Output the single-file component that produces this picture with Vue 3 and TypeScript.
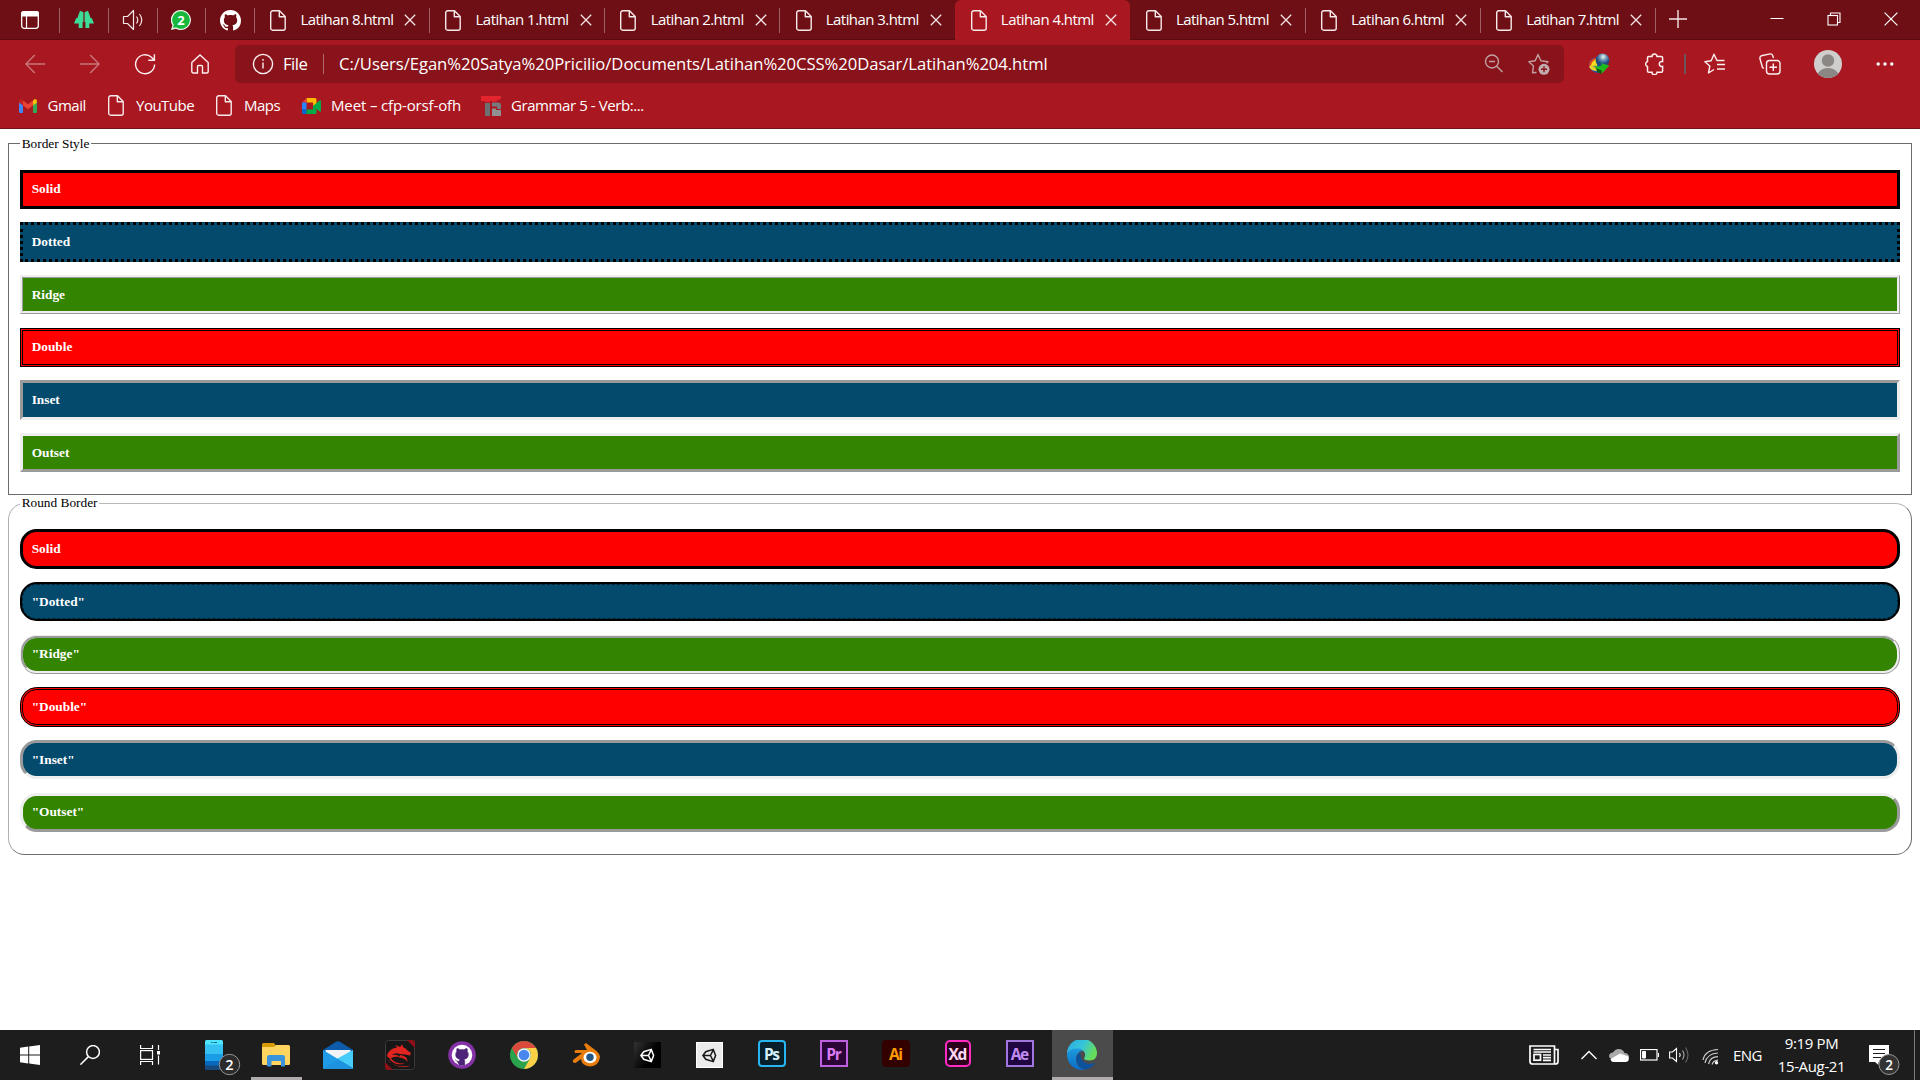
<script setup lang="ts">
interface Tab { title: string; active: boolean }
interface Bar { label: string; kind: string; color: string }

const tabs: Tab[] = [8, 1, 2, 3, 4, 5, 6, 7].map((n) => ({ title: `Latihan ${n}.html`, active: n === 4 }))

const kinds = ['Solid', 'Dotted', 'Ridge', 'Double', 'Inset', 'Outset']
const colors = ['red', 'blue', 'green']
const square: Bar[] = kinds.map((k, i) => ({ label: k, kind: k.toLowerCase(), color: colors[i % 3] }))
const round: Bar[] = square.map((b, i) => ({ ...b, label: i === 0 ? b.label : `"${b.label}"` }))

const adobe = [
  { name: 'Ps', cls: 'ps' },
  { name: 'Pr', cls: 'pr' },
  { name: 'Ai', cls: 'ai' },
  { name: 'Xd', cls: 'xd' },
  { name: 'Ae', cls: 'ae' },
]
</script>

<template>
  <div class="screen">
    <header class="browser">
      <div class="tabstrip">
        <div class="pin first">
          <svg width="20" height="20" viewBox="0 0 20 20"><rect x="1.7" y="1.7" width="16.6" height="16.6" rx="2.5" fill="none" stroke="#fff" stroke-width="1.3" /><path d="M1 6.5V3.5A2.5 2.5 0 0 1 3.500 1h13A2.5 2.5 0 0 1 19 3.500v3z" fill="#fff" /><path d="M6.500 6v12" stroke="#fff" stroke-width="1.200" /></svg>
        </div>
        <div class="pin">
          <svg width="20" height="20" viewBox="0 0 20 20"><path d="M6 .8L9.400 2.300V12H8.600V18H4.700V13.500H0L2.200 8L3.300 8.300zM14 .8L10.600 2.300V12H11.400V18H15.300V13.500H20L17.800 8L16.700 8.300z" fill="#3ddc97" /></svg>
        </div>
        <div class="pin">
          <svg width="22" height="22" viewBox="0 0 22 22" fill="none" stroke="#f3e4e5" stroke-width="1.200"><path d="M1.500 7.500H5.500L11.500 1.500V20.500L5.500 14.500H1.500Z" stroke-linejoin="round" /><path d="M14.500 7.500Q17 11 14.500 14.500M17.500 5Q22 11 17.500 17" /></svg>
        </div>
        <div class="pin chat">
          <svg width="20" height="20" viewBox="0 0 20 20"><path d="M10 0A10 10 0 1 1 5 18.700L0 20L1.400 15.200A10 10 0 0 1 10 0z" fill="#eaf7ec" /><path d="M10 1.300A8.700 8.700 0 1 1 5.200 17.200L1.900 18.100L2.800 15A8.700 8.700 0 0 1 10 1.300z" fill="#16b93c" /><text x="10" y="14.600" text-anchor="middle" font-size="13" font-weight="700" font-family="Open Sans, sans-serif" fill="#fff">2</text></svg>
        </div>
        <div class="pin">
          <svg width="21" height="21" viewBox="0 0 16 16"><path fill="#fff" d="M8 0C3.580 0 0 3.580 0 8c0 3.540 2.290 6.530 5.470 7.590.4.070.55-.17.55-.38 0-.19-.01-.82-.01-1.490-2.010.37-2.530-.49-2.690-.94-.09-.23-.48-.94-.82-1.130-.28-.15-.68-.52-.01-.53.63-.01 1.080.58 1.230.82.720 1.210 1.870.87 2.330.66.070-.52.280-.87.510-1.070-1.780-.2-3.640-.89-3.640-3.950 0-.87.310-1.590.82-2.150-.08-.2-.36-1.020.08-2.120 0 0 .67-.21 2.200.82.640-.18 1.320-.27 2-.27s1.360.090 2 .27c1.530-1.040 2.200-.82 2.200-.82.44 1.100.16 1.920.08 2.120.51.560.82 1.270.82 2.150 0 3.070-1.870 3.750-3.650 3.950.29.250.54.730.54 1.480 0 1.070-.01 1.930-.01 2.200 0 .21.150.46.550.38A8.010 8.010 0 0 0 16 8c0-4.420-3.580-8-8-8z" /></svg>
        </div>
        <div v-for="t in tabs" :key="t.title" class="tab" :class="{ active: t.active }">
          <svg class="file" width="16" height="21" viewBox="0 0 16 21" fill="none" stroke="#f6e9ea" stroke-width="1.400" stroke-linejoin="round"><path d="M2.700.8H9.500L15.200 6.500V18.200a2 2 0 0 1-2 2H2.700a2 2 0 0 1-2-2V2.800a2 2 0 0 1 2-2zM9.300 1V6.700H15" /></svg>
          <span class="title">{{ t.title }}</span>
          <svg class="x" width="12" height="12" viewBox="0 0 12 12" stroke="#f3e4e5" stroke-width="1.300"><path d="M.8.8l10.400 10.400M11.200.8L.8 11.200" /></svg>
        </div>
        <svg class="plus" width="18" height="18" viewBox="0 0 18 18" stroke="#f3e4e5" stroke-width="1.400"><path d="M9 0v18M0 9h18" /></svg>
        <div class="win">
          <svg width="14" height="14" viewBox="0 0 14 14" stroke="#fff"><path d="M.5 6.500h13" /></svg>
          <svg width="14" height="14" viewBox="0 0 14 14" fill="none" stroke="#fff"><rect x="1" y="3.500" width="9.500" height="9.500" stroke-width="1.100" /><path d="M3.500 3.500V1H13V10.500H10.500" stroke-width="1.100" /></svg>
          <svg width="14" height="14" viewBox="0 0 14 14" stroke="#fff" stroke-width="1.200"><path d="M.6.600l12.800 12.800M13.400.600L.600 13.400" /></svg>
        </div>
      </div>

      <div class="toolbar">
        <div class="nav">
          <svg class="dim" width="20" height="20" viewBox="0 0 20 20"><path d="M20 10H1M9.800 1L.9 10l8.900 9" /></svg>
          <svg class="dim" width="20" height="20" viewBox="0 0 20 20"><path d="M0 10h19M10.200 1l8.900 9-8.900 9" /></svg>
          <svg width="22" height="22" viewBox="0 0 22 22"><path d="M20.600 11.500A9.500 9.500 0 1 1 17.500 4.200L20 7M20.400 1.200V7.200H14.300" /></svg>
          <svg width="20" height="20" viewBox="0 0 20 20"><path d="M1.800 8.500L10 1l8.200 7.500V17.500a1.500 1.500 0 0 1-1.500 1.500H12.500V12.500a1 1 0 0 0-1-1h-3a1 1 0 0 0-1 1V19H3.300a1.500 1.500 0 0 1-1.500-1.500z" /></svg>
        </div>
        <div class="address">
          <svg class="info" width="22" height="22" viewBox="0 0 22 22"><circle cx="11" cy="11" r="9.600" /><path d="M11 9.500V15.500M11 6v1.700" /></svg>
          <span class="scheme">File</span>
          <i class="bar"></i>
          <span class="url">C:/Users/Egan%20Satya%20Pricilio/Documents/Latihan%20CSS%20Dasar/Latihan%204.html</span>
          <svg class="mag" width="20" height="20" viewBox="0 0 20 20"><circle cx="8" cy="7.500" r="6.500" /><path d="M12.700 12.200L18.500 18M5 7.500h6" /></svg>
          <svg class="addfav" width="22" height="22" viewBox="0 0 22 22"><path d="M8.500 19.500L4.500 19.800L5.500 13L.9 8.700L7.200 7.700L10 1.500L12.800 7.700L20 8.700L18.500 10.200" stroke-linejoin="round" /><circle cx="16" cy="16.300" r="5.500" fill="#c2adae" stroke="none" /><path d="M16 13.300v6M13 16.300h6" stroke="#89131a" /></svg>
        </div>
        <div class="tools">
          <svg width="22" height="22" viewBox="0 0 22 22"><defs><radialGradient id="globe" cx=".55" cy=".25"><stop offset="0" stop-color="#f4f8e8" /><stop offset=".5" stop-color="#6d97b8" /><stop offset="1" stop-color="#1f4a80" /></radialGradient></defs><g stroke="none"><path d="M9 4Q0 6 1 13Q3 20 11 20L13 12z" fill="#1c56b0" /><path d="M8 4.500Q1 6.500 1 12.500L4 14Q7 9 9 7z" fill="#e2431b" /><path d="M8 6Q3 9 3 13L9 14L9.500 7z" fill="#f8d820" /><path d="M1 13.500Q3 18 9 18L10 14.500Q5 15 3.500 12z" fill="#e9d326" /><circle cx="14.500" cy="7.300" r="6.800" fill="url(#globe)" /><path d="M6.500 12Q11 15 14 11.500L12.500 10L21.300 12.500L13.500 21V17.500Q8 17 6.500 12z" fill="#1cbb1f" /><path d="M13.500 21V17.500L7.500 15L9.500 19z" fill="#0b5810" /></g></svg>
          <svg width="20" height="22" viewBox="0 0 20 22"><path d="M8 3.500a2.500 2.500 0 0 1 5 0h4.300a1.300 1.300 0 0 1 1.300 1.300V8.500a2.600 2.600 0 1 0 0 5V18a1.300 1.300 0 0 1-1.300 1.300H13a2.500 2.500 0 0 1-5 0H4.800A1.300 1.300 0 0 1 3.500 18v-4.500a2.600 2.600 0 0 1 0-5V4.800a1.300 1.300 0 0 1 1.300-1.300z" stroke-width="1.500" /></svg>
          <i class="sep"></i>
          <svg width="22" height="22" viewBox="0 0 22 22"><path d="M12.800 7.200L10 1.200L7.200 7.700L.9 8.700L5.800 13L4.500 20L10 16.500M12.500 7.500H20.500M13 11.500h8M13 16h8" stroke-linejoin="round" stroke-width="1.400" /></svg>
          <svg width="22" height="22" viewBox="0 0 22 22"><rect x="7.500" y="7.500" width="13.500" height="13.500" rx="3" /><path d="M14.300 10.500v7.500M10.500 14.300H18M5 15.500L3.500 14.500L.9 5.500Q.6 3.500 2.500 2.700L11 .9Q13 .7 13.700 2.500L14.500 5" /></svg>
          <svg class="avatar" width="28" height="28" viewBox="0 0 28 28"><clipPath id="av"><circle cx="14" cy="14" r="14" /></clipPath><g clip-path="url(#av)" stroke="none"><rect width="28" height="28" fill="#d0cecd" /><circle cx="14" cy="10.500" r="6.200" fill="#8b8785" /><ellipse cx="14" cy="26" rx="10.500" ry="8" fill="#8b8785" /></g></svg>
          <svg width="18" height="4" viewBox="0 0 18 4"><g fill="#fff" stroke="none"><circle cx="2.200" cy="2" r="1.700" /><circle cx="9" cy="2" r="1.700" /><circle cx="15.800" cy="2" r="1.700" /></g></svg>
        </div>
      </div>

      <div class="bookmarks">
        <div class="bm b1">
          <svg width="18" height="14" viewBox="0 0 18 14"><path d="M0 2.500L4 5V14H1.300A1.300 1.300 0 0 1 0 12.700z" fill="#4285f4" /><path d="M18 2.500L14 5V14h2.700A1.300 1.300 0 0 0 18 12.700z" fill="#34a853" /><path d="M4 6.500V1.500L9 5.300L14 1.500v5L9 10.300z" fill="#ea4335" /><path d="M0 2.500Q0 0 2 0Q3 0 4 1.500v5L0 3.600z" fill="#c5221f" /><path d="M18 2.500Q18 0 16 0Q15 0 14 1.500v5L18 3.600z" fill="#fbbc04" /></svg>
          <span>Gmail</span>
        </div>
        <div v-for="b in [{ n: 'YouTube', c: 'b2' }, { n: 'Maps', c: 'b3' }]" :key="b.n" class="bm" :class="b.c">
          <svg width="16" height="21" viewBox="0 0 16 21" fill="none" stroke="#f6e9ea" stroke-width="1.400" stroke-linejoin="round"><path d="M2.700.8H9.500L15.200 6.500V18.200a2 2 0 0 1-2 2H2.700a2 2 0 0 1-2-2V2.800a2 2 0 0 1 2-2zM9.300 1V6.700H15" /></svg>
          <span>{{ b.n }}</span>
        </div>
        <div class="bm b4">
          <svg width="19" height="16" viewBox="0 0 19 16"><path d="M4.500 0H13a1.500 1.500 0 0 1 1.500 1.500V6l-3.500 2V4.500H4.500z" fill="#ffba00" /><path d="M4.500 0V4.500H0z" fill="#ea4335" /><path d="M0 4.500H4.500v7H0z" fill="#2684fc" /><path d="M0 11.500H4.500V16H1.500A1.500 1.500 0 0 1 0 14.500z" fill="#0066da" /><path d="M4.500 11.500H11V8l3.500 3v3.500A1.500 1.500 0 0 1 13 16H4.500zM14.500 5L18 2.300Q19 2 19 3v10q0 1-1 .7L11 8z" fill="#00ac47" /></svg>
          <span>Meet – cfp-orsf-ofh</span>
        </div>
        <div class="bm b5">
          <svg width="20" height="20" viewBox="0 0 20 20"><path d="M0 0H20V3Q17 2.800 15 5.500H10V4H9V6H4V5H0z" fill="#e5252d" /><path d="M4 7H9V20H4z" fill="#6c7073" /><path d="M11 6.500H17a3 3 0 0 1 3 3V13H16V10.500H11z" fill="#77797c" /><path d="M11 12.500h4V14h5v6h-9z" fill="#8f9193" /></svg>
          <span>Grammar 5 - Verb:...</span>
        </div>
      </div>
    </header>

    <main class="page">
      <fieldset class="group flat">
        <legend>Border Style</legend>
        <p v-for="b in square" :key="b.label" class="box" :class="[b.kind, b.color]">{{ b.label }}</p>
      </fieldset>
      <fieldset class="group curved">
        <legend>Round Border</legend>
        <p v-for="b in round" :key="b.label" class="box" :class="[b.kind, b.color]">{{ b.label }}</p>
      </fieldset>
    </main>

    <footer class="taskbar">
      <div class="cell w60"><svg width="20" height="20" viewBox="0 0 20 20"><path d="M0 2.700L8.200 1.600V9.500H0zM9.200 1.400L20 0V9.500H9.200zM0 10.500H8.200v7.900L0 17.300zM9.200 10.500H20V20L9.200 18.600z" fill="#fff" /></svg></div>
      <div class="cell w60"><svg width="20" height="20" viewBox="0 0 20 20" fill="none" stroke="#fff" stroke-width="1.500"><circle cx="13" cy="7" r="6.400" /><path d="M8.400 11.600L.4 19.600" /></svg></div>
      <div class="cell w60"><svg width="20" height="20" viewBox="0 0 20 20" fill="none" stroke="#fff" stroke-width="1.200"><path d="M.6 0v3.500H12.500V0M.6 20v-3.500H12.500V20M18.500 0v5M18.500 10.500V19.500" /><rect x=".6" y="5.600" width="11.900" height="8.800" /><path d="M17 6h3v3.500h-3z" fill="#fff" stroke="none" /></svg></div>
      <div class="cell phone">
        <svg width="36" height="36" viewBox="0 0 36 36"><path d="M0 1.500Q0 0 1.500 0h15Q18 0 18 1.500V5H0z" fill="#4fe5ff" /><path d="M0 4.500h18V14H0z" fill="#35c1f1" /><path d="M0 14h18v7H0z" fill="#1a9de4" /><path d="M0 21h18v5H0z" fill="#0669bd" /><path d="M0 25.500h18V28.500q0 1.500-1.500 1.500h-15Q0 30 0 28.500z" fill="#174a7c" /><path d="M6 2.500h1.500M8.500 2.500H12" stroke="#14648c" /><circle cx="24.500" cy="24.500" r="10.200" fill="#2b2b2b" stroke="#969696" /><text x="24.500" y="29.700" text-anchor="middle" font-size="14.500" font-weight="600" font-family="Open Sans, sans-serif" fill="#fff">2</text></svg>
      </div>
      <div class="cell running">
        <svg width="28" height="24" viewBox="0 0 28 24"><path d="M0 1.500Q0 0 1.500 0H12l1.500 2V4H0z" fill="#d99a07" /><path d="M0 4h12l2-2H26.500Q28 2 28 3.500V20.500Q28 22 26.500 22h-25Q0 22 0 20.500z" fill="#ffd560" /><path d="M5 23.500V14q0-2 2-2H21q2 0 2 2v9.500H19V18H9.500v5.500z" fill="#3a94dc" /></svg>
      </div>
      <div class="cell"><svg width="30" height="28" viewBox="0 0 30 28"><path d="M0 9L13.500.600q1.500-.9 3 0L30 9v3H0z" fill="#0d5cab" /><path d="M2.500 9H27.500V17L15 22L2.500 16z" fill="#f1f3f6" /><path d="M0 9L15 18L30 28H1Q0 28 0 27z" fill="#1f9be8" /><path d="M30 9V27.500L14 17.800z" fill="#47cbf8" /><path d="M0 28L15 18L30 27.500V28z" fill="#1d93e0" /></svg></div>
      <div class="cell"><svg width="30" height="30" viewBox="0 0 30 30"><rect x=".5" y=".5" width="29" height="29" rx="3" fill="#171717" stroke="#3b3b3b" /><path d="M22 0H27Q30 0 30 3V8zM0 22L8 30H3Q0 30 0 27z" fill="#8f1019" /><path d="M2 15Q5 8 12 7.500L10.500 5L15 7L17 4.500L18.500 7.500Q21 8 22 10L26 13L25 15.500L20 14.500L15 14Q10 12 7 15Q12 14 15 17Q10 16 6 18Q3 19 2 15z" fill="#e02420" /><path d="M15 15Q23 16 22.500 22Q20.500 18 14 17.500zM2 19Q8 28.500 26 25.500Q12 30.500 2 19zM6 18Q9 24 20 23.500Q10 26.500 4.500 19z" fill="#d92320" /></svg></div>
      <div class="cell"><svg width="28" height="28" viewBox="0 0 28 28"><circle cx="14" cy="14" r="13.800" fill="#8431a8" /><circle cx="14" cy="14" r="10.300" fill="#fff" /><path d="M11.300 24V20.500Q8 21 7.500 18.500M11.300 24V20q0-1.200.7-1.700Q7.500 17.500 7.700 13.500Q7.700 11.500 8.800 10.500Q8.300 9 9 7.500Q10.500 7.500 12 8.800Q14 8.300 16 8.800Q17.500 7.500 19 7.500Q19.700 9 19.200 10.500Q20.300 11.500 20.300 13.500Q20.500 17.500 16 18.300q.7.500.7 1.700V24z" fill="#4d2379" stroke="#4d2379" stroke-width=".6" /></svg></div>
      <div class="cell"><svg width="28" height="28" viewBox="0 0 28 28"><circle cx="14" cy="14" r="14" fill="#2ba24c" /><path d="M1.900 7A14 14 0 0 1 26.100 7H14A7 7 0 0 0 7.940 17.500z" fill="#dc4a3e" /><path d="M26.100 7A14 14 0 0 1 14 28L20.060 17.500A7 7 0 0 0 14 7z" fill="#fdd047" /><circle cx="14" cy="14" r="6.800" fill="#f3f3f3" /><circle cx="14" cy="14" r="5.300" fill="#4a86f0" /></svg></div>
      <div class="cell"><svg width="28" height="24" viewBox="0 0 28 24"><path d="M12 1.500L14 0L24.500 8Q28 11 28 14Q27 23 18 23.500Q9.500 23 9 16L3.500 20Q0 20 1 17L10 10H3Q1.500 8.500 3.500 7H15z" fill="#e87d0d" /><ellipse cx="18" cy="14.500" rx="6.500" ry="5.800" fill="#fff" /><circle cx="18" cy="14.300" r="3.700" fill="#235785" /></svg></div>
      <div class="cell"><div class="unity dark"><svg width="15" height="15" viewBox="0 0 16 16" fill="none" stroke="#fff" stroke-width="1.600"><path d="M1 8L4 4L12 1.500L14.500 8L12 14.500L4 12zM1 8H9M9 8L12 2M9 8L12 14" /></svg></div></div>
      <div class="cell"><div class="unity light"><svg width="15" height="15" viewBox="0 0 16 16" fill="none" stroke="#1b1b1b" stroke-width="1.600"><path d="M1 8L4 4L12 1.500L14.500 8L12 14.500L4 12zM1 8H9M9 8L12 2M9 8L12 14" /></svg></div></div>
      <div v-for="a in adobe" :key="a.name" class="cell"><div class="adobe" :class="a.cls">{{ a.name }}</div></div>
      <div class="cell running current">
        <svg width="30" height="30" viewBox="0 0 30 30"><defs><linearGradient id="eg" x1="0" y1="0" x2="1" y2=".4"><stop offset="0" stop-color="#2aa7de" /><stop offset=".55" stop-color="#36c5dc" /><stop offset="1" stop-color="#67dd5b" /></linearGradient><linearGradient id="eb" x1="0" y1="0" x2="0" y2="1"><stop offset="0" stop-color="#1d9be0" /><stop offset="1" stop-color="#0b6cc4" /></linearGradient></defs><path d="M0 14A15 15 0 0 1 30 13.500Q30 20 22.500 20.500Q17 20.500 17 18Q18.500 16.500 18 13.500Q16.500 9 10 9Q3 9 0 14z" fill="url(#eg)" /><path d="M0 14Q3 8.500 10 8.500Q14 8.700 16 10.500Q9 12 9 19Q9.500 28 18 29.600A15 15 0 0 1 0 14z" fill="url(#eb)" /><path d="M13.500 12Q8 16 9.500 21Q12 29 18 29.600Q25 28.500 28.500 22.500Q25 24.500 20 23.500Q12.500 21 13.500 12z" fill="#0d529c" /></svg>
      </div>

      <div class="tray">
        <svg class="news" width="30" height="20" viewBox="0 0 30 20" fill="none" stroke="#fff" stroke-width="1.700"><path d="M25.500 19H3.500Q1 19 1 16.500V1H25.500zM25.500 4.500H29V16.500Q29 19 26.500 19H24M4.500 4.500H22M4.500 7H22M14 10H22M14 12.700H22M14 15.300H22" /><rect x="5" y="9.500" width="6.500" height="5.700" /></svg>
        <svg class="chev" width="16" height="10" viewBox="0 0 16 10" fill="none" stroke="#fff" stroke-width="1.400"><path d="M.5 9L8 1.500L15.500 9" /></svg>
        <svg class="cloud" width="20" height="13" viewBox="0 0 20 13"><path d="M3 10Q0 9.500 0 6.500Q1 3.500 4 3.500Q6 0 9.500 0Q14 0 15.500 4Q19.500 4 20 8L10 9z" fill="#aaa" /><path d="M1.500 10L11 4.500L19.500 7.500Q21 12.500 16.500 13H4.500Q2 13 1.500 10z" fill="#fff" /></svg>
        <svg class="batt" width="19" height="12" viewBox="0 0 19 12" fill="none" stroke="#fff"><rect x=".5" y=".5" width="16.500" height="10.500" stroke-width="1.200" /><path d="M18.500 4v4M2.500 2.500h3v6.500h-3z" fill="#fff" /></svg>
        <svg class="spk" width="21" height="18" viewBox="0 0 21 18" fill="none" stroke="#fff" stroke-width="1.100"><path d="M.6 6H3.500L7.500 2.500V15.500L3.500 12H.6z" /><path d="M10.500 7Q12 9 10.500 11" /><path d="M13.500 4.500Q16.500 9 13.500 13.500" stroke="#aaa" /><path d="M16.500 1.500Q21.500 9 16.500 16.500" stroke="#666" /></svg>
        <svg class="wifi" width="17" height="17" viewBox="0 0 17 17" fill="none" stroke="#ccc" stroke-width="1.200"><path d="M1 12Q3 2 16 1.500M3 15Q5 5.500 16 5M6.500 16Q8 9 16 8.700M10 16.500Q11.500 12.500 16 12.200" /><circle cx="14.500" cy="14.800" r="1.700" fill="#fff" stroke="none" /></svg>
        <span class="lang">ENG</span>
        <div class="clock"><span>9:19 PM</span><span>15-Aug-21</span></div>
        <svg class="notif" width="32" height="32" viewBox="0 0 32 32"><path d="M0 0H20V17H9.500V20L6 17H0z" fill="#fff" /><path d="M4 4.500H16M4 8.500H16M4 12.500H12" stroke="#1d1d1d" stroke-width="1.200" /><circle cx="20" cy="19.500" r="10" fill="#333" stroke="#969696" /><text x="20" y="24.500" text-anchor="middle" font-size="13.500" font-weight="600" font-family="Open Sans, sans-serif" fill="#fff">2</text></svg>
        <i class="peek"></i>
      </div>
    </footer>
  </div>
</template>

<style>
body { margin: 0; overflow: hidden; background: #fff; }
</style>

<style scoped>
.screen { width: 1920px; height: 1080px; display: flex; flex-direction: column; overflow: hidden; background: #fff; font-family: "Open Sans", "Noto Sans", sans-serif; color: #fff; }
svg { display: block; flex: none; }

.browser { height: 129px; flex: none; box-sizing: border-box; background: #a91820; border-bottom: 1px solid #74131a; }
.tabstrip { height: 40px; display: flex; background: #6e0f15; box-shadow: inset 0 -1px 0 #590d12; }
.pin, .tab { position: relative; display: flex; align-items: center; flex: none; box-sizing: border-box; }
.pin { width: 48.75px; justify-content: center; }
.pin.first { width: 60px; }
.pin.chat { padding-right: 2px; }
.pin::after, .tab::after { content: ""; position: absolute; right: 0; top: 8px; width: 1px; height: 25px; background: #9f6064; }
.tab { width: 175.1px; padding-left: 15.3px; }
.tab.active { background: #a91820; border-radius: 6px 6px 0 0; }
.tab.active::after, .tab:has(+ .active)::after { display: none; }
.title { width: 92px; margin: -2px 0 0 14.200px; font-size: 15px; letter-spacing: -0.55px; white-space: nowrap; line-height: 20px; }
.x { margin-left: 12px; }
.plus { margin: 10px 0 0 13px; }
.win { margin-left: auto; display: flex; gap: 43px; padding: 12px 22px 0 0; }

.toolbar { height: 47px; display: flex; align-items: center; }
.toolbar svg { fill: none; stroke: #fbeff0; stroke-width: 1.4; }
.nav { width: 235px; box-sizing: border-box; display: flex; align-items: center; padding-left: 25px; }
.nav svg { margin-right: 35px; }
.nav svg:nth-child(2) { margin-right: 34px; }
.nav svg:nth-child(3) { margin-right: 34px; }
.toolbar .dim { stroke: #c9767b; }
.address { width: 1329px; height: 38px; box-sizing: border-box; background: #89131a; border-radius: 5px; display: flex; align-items: center; padding-left: 16.5px; font-size: 16.67px; white-space: nowrap; margin-top: 1px; }
.address span { margin-top: -1px; }
.scheme { width: 26px; margin-left: 9.500px; letter-spacing: -0.5px; }
.bar { width: 1px; height: 20px; margin-left: 14px; background: #b26a6e; }
.url { margin-left: 15px; letter-spacing: -0.06px; }
.toolbar .address .mag { margin-left: auto; stroke: #c2a0a2; }
.toolbar .address .addfav { margin: 0 14px 0 24.5px; stroke: #c2a0a2; }
.tools { display: flex; align-items: center; padding-left: 24px; }
.tools svg:nth-child(2) { margin-left: 34px; }
.sep { width: 1.500px; height: 20px; margin-left: 20px; background: #6d5659; }
.tools svg:nth-child(4) { margin-left: 18.5px; }
.tools svg:nth-child(5) { margin-left: 32.5px; }
.tools svg:nth-child(6) { margin-left: 33px; }
.tools svg:nth-child(7) { margin-left: 34px; }

.bookmarks { display: flex; height: 37px; align-items: center; padding-left: 19px; font-size: 15px; }
.bm { display: flex; align-items: center; white-space: nowrap; letter-spacing: -0.5px; }
.bm span { margin-top: -1px; }
.bm svg { margin-right: 12px; }
.b1 { width: 89px; }
.b1 svg { margin-right: 10.5px; }
.b2 { width: 108px; }
.b3 { width: 85.5px; }
.b4 { width: 179.5px; letter-spacing: -0.14px; }
.b4 svg { margin-right: 10.5px; }
.b5 { letter-spacing: -0.42px; }
.b5 svg { margin-right: 10px; }

.page { flex: 1; padding: 7.67px 8px 0; font: 13.333px "Liberation Serif", "Times New Roman", serif; color: #000; }
.group { display: block; margin: 0; box-sizing: border-box; padding: 5.67px 11px 0; min-width: 0; }
.flat { border: 1px solid #6b6b6b; height: 358px; }
.curved { border: 1px solid; border-color: #b8b8b8 #6e6e6e #6e6e6e #b0b0b0; border-radius: 16.67px; height: 358.67px; margin-top: 1.66px; }
legend { padding: 0 1.67px; line-height: 14px; }
.box { box-sizing: border-box; height: 39.33px; margin: 0 0 13.34px; padding: 8.67px 8.67px 0; line-height: 16px; font-weight: 700; color: #fff; border-width: 3px; border-color: #000; }
legend + .box { margin-top: 13.33px; }
.curved .box { border-radius: 16.67px; }
.red { background: #f00; }
.blue { background: #034a6d; }
.green { background: #338401; }
.solid { border-style: solid; }
.dotted { border-style: dotted; }
.double { border-style: double; }
.ridge { border-style: ridge; border-color: #eee; }
.inset { border-style: inset; border-color: #eee; }
.outset { border-style: outset; border-color: #eee; }
.curved .dotted { border: 2px solid #000; padding: 9.67px 9.67px 0; outline: 1px dashed rgba(0, 0, 0, 0.55); outline-offset: -3px; }

.taskbar { height: 50px; flex: none; display: flex; background: #1d1d1d; }
.cell { position: relative; width: 62px; height: 50px; flex: none; display: flex; align-items: center; justify-content: center; }
.w60 { width: 60px; }
.phone { width: 65.3px; justify-content: flex-start; box-sizing: border-box; padding: 5px 0 0 25px; }
.running::after { content: ""; position: absolute; left: 5.500px; right: 5.500px; bottom: 0; height: 3px; background: #b1acac; }
.current::before { content: ""; position: absolute; left: 0.5px; right: 0.5px; top: 0; bottom: 0; background: #4b4b4b; }
.current::after { left: 0.5px; right: 0.5px; }
.current svg { position: relative; }
.unity { width: 27px; height: 26px; margin-right: 1px; display: flex; align-items: center; justify-content: center; }
.unity.dark { background: linear-gradient(120deg, #333, #000 60%); }
.unity.light { background: #ececec; box-shadow: inset 0 0 0 1px #fff; }
.adobe { width: 28px; height: 27px; margin: -3px 1px 0 0; box-sizing: border-box; border: 2px solid; display: flex; align-items: center; justify-content: center; font-size: 15.5px; line-height: 20px; font-weight: 700; letter-spacing: -1.4px; padding-right: 1px; }
.ps { background: #071f2a; border-color: #29b5ef; color: #d5f0fb; border-radius: 4px; }
.pr { background: #2a0536; border-color: #bd61e0; color: #da7bf5; }
.ai { background: #330000; border-color: #330000; color: #ff9a00; border-radius: 4px; }
.xd { background: #2b001b; border-color: #ff2bc2; color: #ffd9f3; border-radius: 5px; width: 26px; }
.ae { background: #1f0640; border-color: #a277dd; color: #c08cf4; }

.tray { margin-left: auto; display: flex; align-items: center; height: 50px; font-size: 15px; }
.chev { margin-left: 22px; }
.cloud { margin-left: 12px; }
.batt { margin-left: 11px; }
.spk { margin-left: 10px; }
.wifi { margin-left: 12px; margin-top: 2px; }
.lang { margin-left: 14px; width: 29px; letter-spacing: -0.6px; margin-top: -1px; }
.clock { margin-left: 14px; width: 71px; display: flex; flex-direction: column; align-items: center; line-height: 23px; letter-spacing: -0.35px; white-space: nowrap; }
.notif { margin: 11px 0 0 22px; }
.peek { width: 1px; height: 50px; margin: 0 5px 0 13px; background: #7a7a7a; }
</style>
